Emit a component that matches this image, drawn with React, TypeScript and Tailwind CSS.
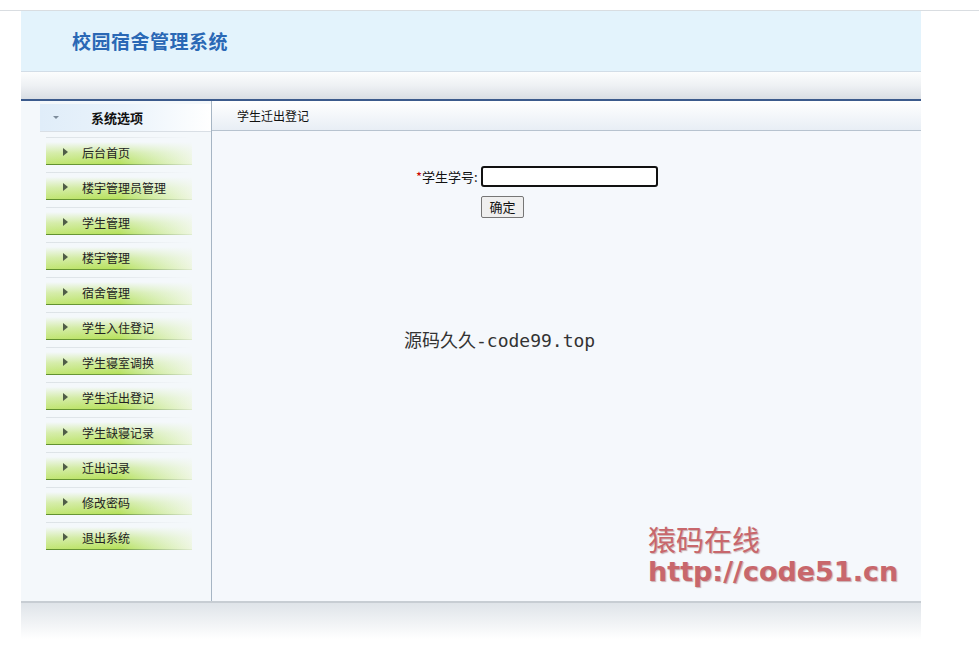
const menuItems = [
  '后台首页',
  '楼宇管理员管理',
  '学生管理',
  '楼宇管理',
  '宿舍管理',
  '学生入住登记',
  '学生寝室调换',
  '学生迁出登记',
  '学生缺寝记录',
  '迁出记录',
  '修改密码',
  '退出系统',
];

const cjk = "font-['Noto_Sans_CJK_SC',sans-serif]";

function MenuItem({ label }: { label: string }) {
  return (
    <div className="h-[35px] pt-[2px] pl-[25px] pr-[19px]">
      <div className="h-px bg-gradient-to-r from-[#dde3e7] via-[#e3e8ec] to-[#f4f8fb]" />
      <div className="mt-[4px] relative h-[22px] bg-gradient-to-r from-[#c2e676] via-[#b6e15a] to-[#eef6e0]">
        <div className="absolute inset-0 bg-gradient-to-b from-[#f4f8fb] via-[#f4f8fb]/40 to-transparent" />
        <div className="relative flex h-full items-center">
          <span className="ml-[17px] mb-[3px] h-0 w-0 border-y-[4px] border-l-[5px] border-y-transparent border-l-[#4f5d47]" />
          <span className={`ml-[14px] text-[12px] leading-none text-[#222] ${cjk}`}>{label}</span>
        </div>
      </div>
      <div className="h-px bg-gradient-to-r from-[#5f8f2e] via-[#74a040] to-[#e0ecd0]" />
    </div>
  );
}

export default function App() {
  return (
    <div className={`min-h-[660px] bg-white ${cjk}`}>
      <div className="h-[11px] border-b border-[#d9dde1]" />
      <div className="ml-[21px] w-[900px]">
        {/* header */}
        <div className="flex h-[61px] items-center border-b border-[#d2dde7] bg-[#e3f3fc] pl-[51px]">
          <span className="text-[19px] font-bold tracking-[0.5px] text-[#2a68b5]">校园宿舍管理系统</span>
        </div>
        <div className="h-[27px] bg-gradient-to-b from-[#fcfdfd] via-[#eef1f4] to-[#d9dee4]" />
        <div className="h-[2px] bg-[#3b5a8c]" />

        {/* body */}
        <div className="flex h-[500px]">
          <div className="w-[191px] shrink-0 border-r border-[#a6b5c4] bg-[#f4f8fb] pt-[3px]">
            <div className="ml-[19px] flex h-[28px] items-center border-b border-[#d9dfe5] bg-gradient-to-r from-[#e0edf9] via-[#eaf3fb] to-white">
              <span className="ml-[13px] h-0 w-0 border-x-[3px] border-t-[3px] border-x-transparent border-t-[#7d8c9b]" />
              <span className="ml-[32px] text-[13px] font-bold text-[#111]">系统选项</span>
            </div>
            <div className="pt-[3px]">
              {menuItems.map((m) => (
                <MenuItem key={m} label={m} />
              ))}
            </div>
          </div>

          <div className="flex-1 bg-[#f5f8fc]">
            <div className="flex h-[30px] items-center border-b border-[#b7c3cf] bg-gradient-to-b from-white to-[#e8eef5] pl-[25px]">
              <span className="text-[12px] text-[#111]">学生迁出登记</span>
            </div>
            <div className="pt-[35px]">
              <div className="ml-[204px] flex items-center">
                <label className="text-[13px] text-[#111]">
                  <span className="text-[#c00]">*</span>学生学号:
                </label>
                <input className="ml-[3px] h-[21px] w-[177px] rounded-[3px] border-2 border-[#111] bg-white px-1 text-[13px] outline-none" />
              </div>
              <div className="ml-[269px] mt-[6px]">
                <button className="h-[22px] w-[43px] rounded-[2px] border border-[#767676] bg-[#efefef] text-[13px] text-[#111]">
                  确定
                </button>
              </div>
              <div className="ml-[192px] mt-[111px] text-[18px] leading-[24px] text-[#333] font-['DejaVu_Sans_Mono','Noto_Sans_CJK_SC',monospace]">
                源码久久-code99.top
              </div>
              <div className="ml-[436px] mt-[170px] text-[#c8676c] [text-shadow:1px_1px_1px_rgba(120,40,40,0.35)]">
                <div className="text-[28px] leading-[33px]">猿码在线</div>
                <div className="text-[27px] font-bold leading-[31px] font-['DejaVu_Sans','Noto_Sans_CJK_SC',sans-serif]">
                  http://code51.cn
                </div>
              </div>
            </div>
          </div>
        </div>

        {/* footer */}
        <div className="h-[2px] bg-[#c7cdd3]" />
        <div className="h-[36px] bg-gradient-to-b from-[#dfe4e9] to-white" />
      </div>
    </div>
  );
}
